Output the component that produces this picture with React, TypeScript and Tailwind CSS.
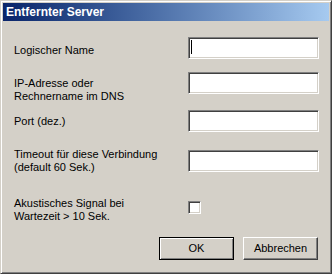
import React from "react";

const sunken =
  "border-t border-l border-t-[#808080] border-l-[#808080] border-b border-r border-b-white border-r-white shadow-[inset_1px_1px_#404040,inset_-1px_-1px_#d4d0c8] bg-white";

function TextBox({ cursor = false, className = "" }: { cursor?: boolean; className?: string }) {
  return (
    <div className={`w-[131px] h-[22px] ${sunken} relative shrink-0 ${className}`}>
      {cursor && <div className="absolute left-[2px] top-[2px] w-px h-[14px] bg-black" />}
    </div>
  );
}

export default function App() {
  return (
    <div className="w-[332px] h-[274px] bg-[#d4d0c8] border border-t-[#d4d0c8] border-l-[#d4d0c8] border-b-[#404040] border-r-[#404040] shadow-[inset_1px_1px_#ffffff,inset_-1px_-1px_#808080] p-[2px] font-['Liberation_Sans',Arial,sans-serif] text-[11px] leading-[13px] text-black">
      <div className="h-[18px] bg-gradient-to-r from-[#0a246a] to-[#a6caf0] text-white font-bold text-[12px] leading-[18px] pl-[3px]">
        Entfernter Server
      </div>
      <div className="pl-[11px] pt-[16px] flex flex-col">
        <div className="flex items-start h-[22px]">
          <div className="w-[174px] pt-[7px]">Logischer Name</div>
          <TextBox cursor />
        </div>
        <div className="flex items-start h-[22px] mt-[13px]">
          <div className="w-[174px] pt-[5px]">
            IP-Adresse oder
            <br />
            Rechnername im DNS
          </div>
          <TextBox />
        </div>
        <div className="flex items-start h-[22px] mt-[16px]">
          <div className="w-[174px] pt-[5px]">Port (dez.)</div>
          <TextBox />
        </div>
        <div className="flex items-start h-[24px] mt-[16px]">
          <div className="w-[174px]">
            Timeout für diese Verbindung
            <br />
            (default 60 Sek.)
          </div>
          <TextBox className="mt-[2px]" />
        </div>
        <div className="flex items-start h-[26px] mt-[25px]">
          <div className="w-[174px]">
            Akustisches Signal bei
            <br />
            Wartezeit &gt; 10 Sek.
          </div>
          <div className={`w-[13px] h-[13px] mt-[4px] ${sunken}`} />
        </div>
        <div className="flex mt-[14px] ml-[145px] gap-[9px]">
          <div className="w-[75px] h-[23px] border border-black shadow-[inset_1px_1px_#ffffff,inset_-1px_-1px_#808080] flex items-center justify-center">
            OK
          </div>
          <div className="w-[75px] h-[23px] border border-t-white border-l-white border-b-[#404040] border-r-[#404040] shadow-[inset_-1px_-1px_#808080] flex items-center justify-center">
            Abbrechen
          </div>
        </div>
      </div>
    </div>
  );
}
